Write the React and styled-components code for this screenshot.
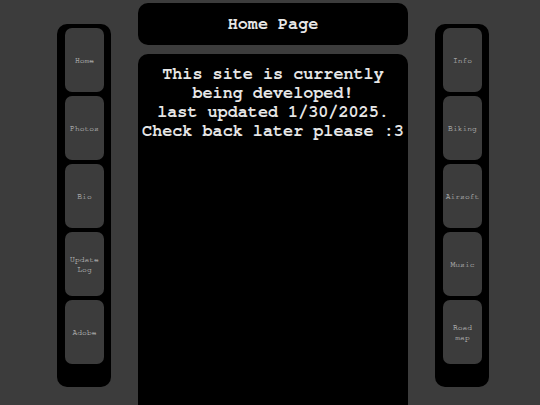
import React from "react";
import styled, { createGlobalStyle } from "styled-components";

const leftLinks = ["Home", "Photos", "Bio", "Update Log", "Adobe"];
const rightLinks = ["Info", "Biking", "Airsoft", "Music", "Road map"];

const GlobalStyle = createGlobalStyle`
  html, body {
    margin: 0;
    padding: 0;
    background: #3c3c3c;
    font-family: "Nimbus Mono PS", "Nimbus Mono L", "FreeMono", "Courier", "Liberation Mono", monospace;
    overflow: hidden;
  }
`;

function Sidebar({ links }) {
  return (
    <Side>
      {links.map((l) => (
        <NavButton key={l}>{l}</NavButton>
      ))}
    </Side>
  );
}

function App() {
  return (
    <>
      <GlobalStyle />
      <Page>
        <Sidebar links={leftLinks} />
        <Center>
          <Header>Home Page</Header>
          <Main>
            <p>
              This site is currently
              <br />
              being developed!
              <br />
              last updated 1/30/2025.
              <br />
              Check back later please :3
            </p>
          </Main>
        </Center>
        <Sidebar links={rightLinks} />
      </Page>
    </>
  );
}

const Page = styled.div`
  display: flex;
  align-items: flex-start;
  gap: 27px;
  height: 405px;
  padding-left: 57px;
  box-sizing: border-box;
`;

const Side = styled.nav`
  width: 54px;
  margin-top: 24px;
  box-sizing: border-box;
  padding: 4px 7px 23px 8px;
  background: #000;
  border-radius: 10px;
  display: flex;
  flex-direction: column;
  gap: 4px;
`;

const NavButton = styled.a`
  height: 64px;
  box-sizing: border-box;
  padding: 2px 3px 0;
  background: #3c3c3c;
  border-radius: 7px;
  display: flex;
  align-items: center;
  justify-content: center;
  text-align: center;
  color: #ababab;
  -webkit-text-stroke: 0.15px #ababab;
  font-size: 8px;
  line-height: 10px;
  cursor: pointer;
`;

const Center = styled.div`
  width: 270px;
  display: flex;
  flex-direction: column;
  gap: 9px;
  padding-top: 3px;
  height: 100%;
  box-sizing: border-box;
`;

const Header = styled.header`
  height: 42px;
  background: #000;
  border-radius: 10px;
  display: flex;
  align-items: center;
  justify-content: center;
  color: #e6e6e6;
  font-weight: bold;
  font-size: 16.8px;
`;

const Main = styled.main`
  flex: 1;
  background: #000;
  border-radius: 10px 10px 0 0;
  margin-bottom: -10px;
  text-align: center;
  color: #e6e6e6;

  p {
    margin: 11px 0 0;
    font-weight: bold;
    font-size: 16.8px;
    line-height: 19px;
  }
`;

export default App;
